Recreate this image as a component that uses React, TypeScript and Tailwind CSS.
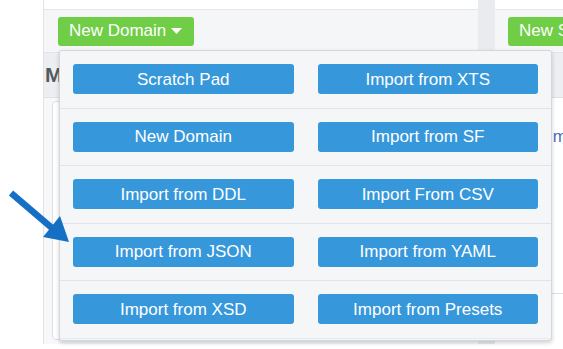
import React from "react";

const rows: [string, string][] = [
  ["Scratch Pad", "Import from XTS"],
  ["New Domain", "Import from SF"],
  ["Import from DDL", "Import From CSV"],
  ["Import from JSON", "Import from YAML"],
  ["Import from XSD", "Import from Presets"],
];

function Caret() {
  return (
    <svg width="11" height="6" viewBox="0 0 11 6" className="ml-[5px]">
      <path d="M0 0 L11 0 L5.5 6 Z" fill="#ffffff" />
    </svg>
  );
}

export default function App() {
  return (
    <div
      className="relative w-[563px] h-[349px] overflow-hidden bg-white flex"
      style={{ fontFamily: '"Liberation Sans", Arial, sans-serif' }}
    >
      <div className="w-[43px] shrink-0" />
      {/* left panel */}
      <div className="w-[435px] shrink-0 h-[344px] flex flex-col border-l border-[#e1e3e6]">
        <div className="h-[10px] bg-white border-b border-[#e4e6e9]" />
        <div className="h-[43px] bg-[#f5f6f8] border-b border-[#e2e4e7] flex items-center pl-[14px]">
          <div className="h-[29px] pl-[11px] pr-[12px] rounded-[3px] bg-[#6fcd46] text-white text-[17px] flex items-center">
            New Domain
            <Caret />
          </div>
        </div>
        <div className="h-[44px] bg-[#eceef1] flex items-center pl-[1px] text-[21px] font-bold text-[#555a60]">
          Models
        </div>
        <div className="flex-1 bg-[#f7f8f9] border-t border-[#dfe2e5] pl-[8px] pt-[3px] pb-[4px]">
          <div className="h-full bg-white border border-[#dde0e4] rounded-sm" />
        </div>
      </div>
      {/* divider strip */}
      <div className="w-[17px] shrink-0 h-[344px] bg-[#e9ebef]" />
      {/* right panel */}
      <div className="flex-1 h-[344px] flex flex-col">
        <div className="h-[10px] bg-white border-b border-[#e4e6e9]" />
        <div className="h-[43px] bg-[#f5f6f8] border-b border-[#e2e4e7] flex items-center pl-[13px]">
          <div className="h-[29px] px-[11px] rounded-[3px] bg-[#6fcd46] text-white text-[17px] flex items-center whitespace-nowrap">
            New Schema
          </div>
        </div>
        <div className="h-[44px] bg-[#eceef1]" />
        <div className="flex-1 bg-white border-t border-[#dfe2e5] flex flex-col">
          <div className="h-[195px] pt-[26px] pl-[53px] text-[17px] text-[#4a6fc0] whitespace-nowrap">
            Import
          </div>
          <div className="border-t border-[#dcdfe3]" />
        </div>
      </div>

      {/* dropdown */}
      <div className="absolute left-[59px] top-[50px] w-[493px] bg-[#f5f6f8] border border-[#d4d7db] rounded-[3px] shadow-[0_2px_4px_rgba(0,0,0,0.18)] flex flex-col pb-[1px]">
        {rows.map((r, i) => (
          <div
            key={i}
            className={
              "h-[57.5px] flex items-center gap-[24px] px-[13px] " +
              (i < rows.length - 1 ? "border-b border-[#e1e3e6]" : "border-b border-[#e8eaed]")
            }
          >
            {r.map((t) => (
              <div
                key={t}
                className="flex-1 h-[30px] rounded-[3px] bg-[#3697db] text-white text-[17px] flex items-center justify-center"
              >
                {t}
              </div>
            ))}
          </div>
        ))}
      </div>

      {/* annotation arrow */}
      <svg className="absolute left-0 top-0" width="80" height="260" viewBox="0 0 80 260">
        <line x1="11" y1="193" x2="52" y2="228" stroke="#1570c4" strokeWidth="6.5" />
        <polygon points="69,242 43,237 60,216" fill="#1570c4" />
      </svg>
    </div>
  );
}
